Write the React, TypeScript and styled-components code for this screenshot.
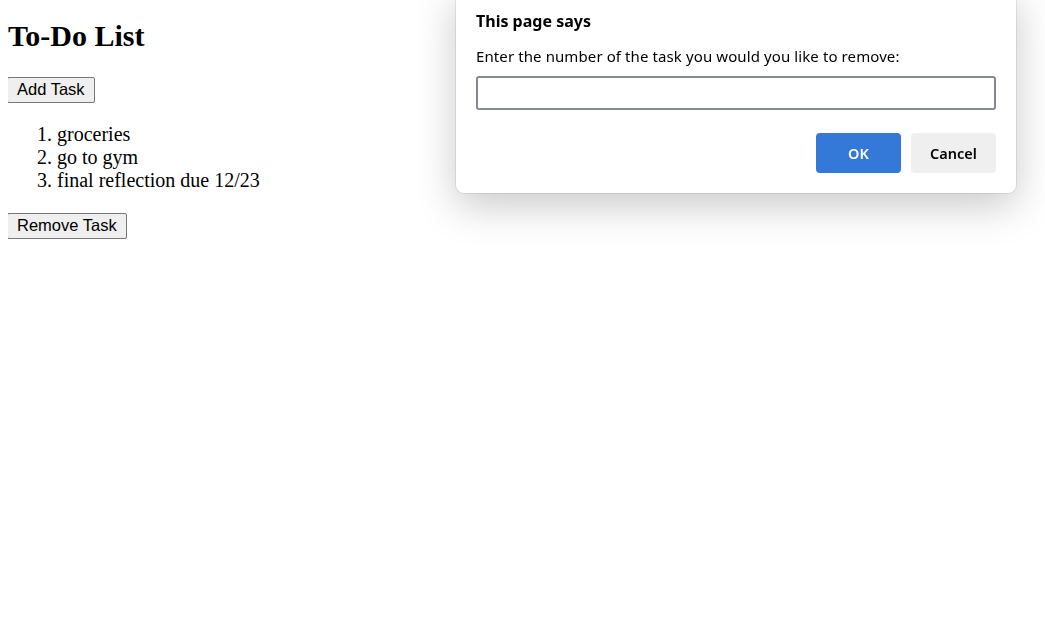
import styled, { createGlobalStyle } from "styled-components";

const GlobalStyle = createGlobalStyle`
  body {
    margin: 8px;
    font-family: "Liberation Serif", "Times New Roman", serif;
    background: #ffffff;
    color: #000000;
  }
`;

const Title = styled.h1`
  font-size: 30px;
  font-weight: bold;
  margin: 11px 0 24px;
  line-height: 34px;
`;

const PageButton = styled.button`
  font-family: "Liberation Sans", Arial, sans-serif;
  font-size: 16.5px;
  color: #000;
  background: #efefef;
  border: 1px solid #767676;
  border-radius: 2px;
  padding: 2px 9px 3px;
  line-height: 19px;
  margin-left: -1px;
`;

const TaskList = styled.ol`
  font-size: 20px;
  margin: 20px 0 21px;
  padding-left: 49px;
  line-height: 23px;
`;

const Dialog = styled.div`
  position: fixed;
  top: -12px;
  left: 456px;
  width: 560px;
  box-sizing: border-box;
  padding: 22px 20px 20px;
  background: #fff;
  border-radius: 8px;
  box-shadow: 0 0 0 1px rgba(0, 0, 0, 0.08), 0 12px 40px rgba(0, 0, 0, 0.22);
  font-family: "Noto Sans", "Open Sans", sans-serif;
  color: #000;
`;

const DialogTitle = styled.div`
  font-size: 16px;
  font-weight: bold;
  line-height: 22px;
`;

const Message = styled.div`
  font-size: 15px;
  line-height: 20px;
  margin-top: 14px;
  letter-spacing: 0.1px;
`;

const PromptInput = styled.input`
  display: block;
  box-sizing: border-box;
  width: 100%;
  height: 34px;
  margin-top: 10px;
  border: 2px solid #858a90;
  border-radius: 3px;
  outline: none;
`;

const Actions = styled.div`
  display: flex;
  justify-content: flex-end;
  gap: 10px;
  margin-top: 23px;
`;

const DialogButton = styled.button<{ primary?: boolean }>`
  width: 85px;
  height: 40px;
  border: none;
  border-radius: 4px;
  font-family: "Noto Sans", "Open Sans", sans-serif;
  font-size: 14.5px;
  font-weight: 600;
  background: ${(p) => (p.primary ? "#3478d8" : "#efefef")};
  color: ${(p) => (p.primary ? "#ffffff" : "#000000")};
`;

const tasks = ["groceries", "go to gym", "final reflection due 12/23"];

export default function App() {
  return (
    <>
      <GlobalStyle />
      <Title>To-Do List</Title>
      <PageButton>Add Task</PageButton>
      <TaskList>
        {tasks.map((t) => (
          <li key={t}>{t}</li>
        ))}
      </TaskList>
      <PageButton>Remove Task</PageButton>
      <Dialog>
        <DialogTitle>This page says</DialogTitle>
        <Message>Enter the number of the task you would you like to remove:</Message>
        <PromptInput />
        <Actions>
          <DialogButton primary>OK</DialogButton>
          <DialogButton>Cancel</DialogButton>
        </Actions>
      </Dialog>
    </>
  );
}
